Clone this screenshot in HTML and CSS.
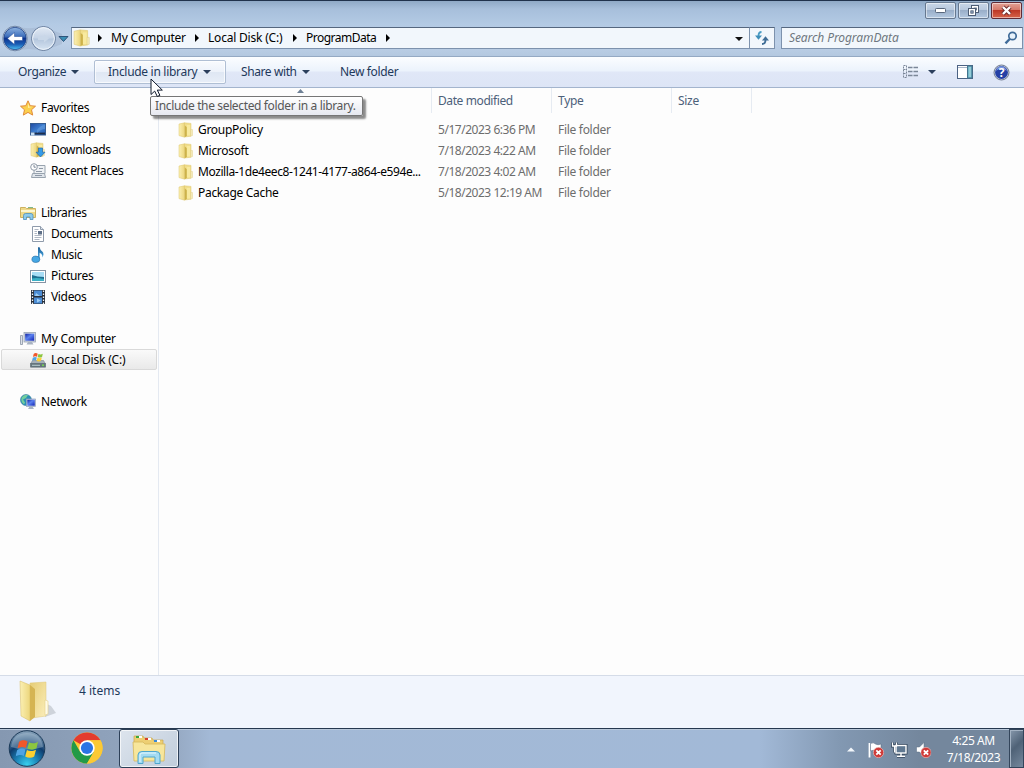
FILE: index.html
```html
<!DOCTYPE html>
<html lang="en">
  <head>
    <meta charset="UTF-8" />
    <meta name="viewport" content="width=device-width, initial-scale=1.0" />
    <title>ProgramData</title>
    <link rel="stylesheet" href="styles.css">
  </head>
  <body>
    <!-- shared gradients and symbols -->
    <svg class="defs" width="0" height="0">
      <defs>
        <linearGradient id="g-folder" x1="0" x2="1" y1="0" y2="0">
          <stop offset="0" stop-color="#fbf0b4" />
          <stop offset="1" stop-color="#ecd67c" />
        </linearGradient>
        <linearGradient id="g-gold" x1="0" x2="1" y1="0" y2="1">
          <stop offset="0" stop-color="#e6cd75" />
          <stop offset="1" stop-color="#fbeebb" />
        </linearGradient>
        <linearGradient id="g-screen" x1="0" x2="1" y1="0" y2="1">
          <stop offset="0" stop-color="#1f49a0" />
          <stop offset="0.5" stop-color="#3f7fd0" />
          <stop offset="1" stop-color="#2458ac" />
        </linearGradient>
        <linearGradient id="g-monitor" x1="0" x2="1" y1="0" y2="1">
          <stop offset="0" stop-color="#0f1fa0" />
          <stop offset="0.45" stop-color="#5b82f0" />
          <stop offset="1" stop-color="#1022b4" />
        </linearGradient>
        <linearGradient id="g-music" x1="0" x2="0" y1="0" y2="1">
          <stop offset="0" stop-color="#1c5f97" />
          <stop offset="1" stop-color="#49aeea" />
        </linearGradient>
        <linearGradient id="g-back" x1="0" x2="0" y1="0" y2="1">
          <stop offset="0" stop-color="#8fb4e0" />
          <stop offset="0.4" stop-color="#3f70bd" />
          <stop offset="0.5" stop-color="#0d348f" />
          <stop offset="0.75" stop-color="#1a5cb4" />
          <stop offset="1" stop-color="#4cc0f2" />
        </linearGradient>
        <linearGradient id="g-forward" x1="0" x2="0" y1="0" y2="1">
          <stop offset="0" stop-color="#e3ebf5" />
          <stop offset="0.48" stop-color="#c5d3e6" />
          <stop offset="0.52" stop-color="#b4c6dd" />
          <stop offset="1" stop-color="#d8e5f3" />
        </linearGradient>
        <radialGradient id="g-orb" cx="0.5" cy="0.95" r="0.95">
          <stop offset="0" stop-color="#39d0ee" />
          <stop offset="0.35" stop-color="#1b7fb4" />
          <stop offset="0.62" stop-color="#0f3d6e" />
          <stop offset="1" stop-color="#8fa9bf" />
        </radialGradient>
        <symbol id="i-folder" viewBox="0 0 16 16">
          <path d="M6.500.8l6.500.6v12.800l-6.500.8z" fill="#f0dd8a" stroke="#dfc76f" stroke-width=".5" />
          <path d="M1 2l5.500-1.200v14.400L1 13.600z" fill="url(#g-folder)" stroke="#dcc46a" stroke-width=".5" />
          <path d="M6.800 3.500l2.200 1.800v8.500l-2.200 1.400z" fill="#cdb24a" />
          <path d="M8.800 3h3.400v10.500H8.800z" fill="#f8ea9f" />
          <path d="M12.500 7.500h2v6l-2 .7z" fill="#f3e9b6" stroke="#ddcb84" stroke-width=".4" />
        </symbol>
        <symbol id="i-flag" viewBox="-2 1 23 20">
          <path d="M1.500 4.500C4 2 7.500 2.500 10 4L8.300 10.500C6 9 3 9 0 11z" fill="#f0572a" />
          <path d="M11.500 4.700C14 6 17.500 6.300 20.500 4.200L19 10.800C16 12.800 12.500 12.300 9.800 11z" fill="#8cc63f" />
          <path d="M-.3 12.500C3 10.500 5.700 10.500 8 12L6.300 18.500C4 17 1 17-2 19z" fill="#4fa3e3" />
          <path d="M9.400 12.600C12 14 15.500 14 18.500 12.200L16.700 19C14 20.800 10.500 20.500 7.700 19z" fill="#fdd031" />
        </symbol>
        <symbol id="i-x" viewBox="0 0 10 10">
          <circle cx="5" cy="5" r="4.700" fill="#cf3a38" stroke="#ecc1bd" stroke-width=".6" />
          <path d="M3 3l4 4M7 3L3 7" stroke="#fff" stroke-width="1.600" />
        </symbol>
      </defs>
    </svg>

    <div class="window">
      <div class="titlebar">
        <div class="win-btn">
          <svg width="12" height="7"><rect x=".5" y="1.500" width="10" height="4" rx=".8" fill="#fff" stroke="#58677c" /></svg>
        </div>
        <div class="win-btn">
          <svg width="13" height="12">
            <rect x="4.500" y=".5" width="7" height="7" fill="#fff" stroke="#4d5d74" />
            <rect x="7" y="3" width="2.500" height="2" fill="#b6c5d8" stroke="#4d5d74" stroke-width=".8" />
            <rect x="1.500" y="3.500" width="7" height="7" fill="#fff" stroke="#4d5d74" />
            <rect x="3.800" y="5.800" width="2.400" height="2.400" fill="#8fa3bd" stroke="#4d5d74" stroke-width=".8" />
          </svg>
        </div>
        <div class="win-btn close">
          <svg width="13" height="11">
            <path d="M3 2l7 7M10 2L3 9" stroke="#6c2a2a" stroke-width="4.200" />
            <path d="M3 2l7 7M10 2L3 9" stroke="#fff" stroke-width="2.400" />
          </svg>
        </div>
      </div>

      <div class="navbar">
        <svg class="nav-buttons" width="71" height="30" viewBox="0 0 71 30">
          <path d="M15 2.500Q29 6 43 2.500L62 10V20L43 27Q29 23 15 27z" fill="#9fb2cc" opacity=".5" />
          <circle cx="15" cy="14.500" r="12.300" fill="#e4edf7" stroke="#7389a8" />
          <circle cx="15" cy="14.500" r="11.200" fill="url(#g-back)" stroke="#1d3f83" stroke-width=".8" />
          <path d="M14.500 8.500L7.500 14.500l7 6v-4h8v-4h-8z" fill="#fff" stroke="#214b96" stroke-width=".5" />
          <circle cx="43.500" cy="14.500" r="12" fill="url(#g-forward)" stroke="#677d9d" />
          <circle cx="43.500" cy="14.500" r="10.900" fill="none" stroke="#eef4fb" stroke-width="1" />
          <path d="M44 10.500l5 4-5 4v-2.500h-6v-3h6z" fill="#c9d7e8" />
          <path d="M59 12.500h9l-4.500 5z" fill="#3c8fb5" stroke="#274b72" stroke-width=".9" />
        </svg>
        <div class="address">
          <svg class="addr-icon" width="18" height="18"><use href="#i-folder" /></svg>
          <span class="arrow"></span>
          <span class="crumb c1">My Computer</span>
          <span class="arrow"></span>
          <span class="crumb c2">Local Disk (C:)</span>
          <span class="arrow"></span>
          <span class="crumb c3">ProgramData</span>
          <span class="arrow"></span>
          <span class="drop"></span>
        </div>
        <div class="refresh">
          <svg width="16" height="16">
            <path d="M7.500 2Q4.500 2 4.500 6" fill="none" stroke="#4a9cc4" stroke-width="1.800" />
            <path d="M1 5.500h7L4.500 9.800z" fill="#3f8fb9" />
            <path d="M8 14Q11.500 14 11.500 10" fill="none" stroke="#3f6d96" stroke-width="1.800" />
            <path d="M8 10.500h7L11.500 6.200z" fill="#3f6d96" />
          </svg>
        </div>
        <div class="search">
          <span class="search-text">Search ProgramData</span>
          <svg width="14" height="14">
            <circle cx="8.500" cy="5" r="3.700" fill="#e8f3fc" stroke="#3f6b99" stroke-width="1.700" />
            <path d="M5.700 8L1.500 12.300" stroke="#3f6b99" stroke-width="2.400" />
          </svg>
        </div>
      </div>

      <div class="toolbar">
        <div class="tool organize"><span>Organize</span><i class="caret"></i></div>
        <div class="tool include hot"><span>Include in library</span><i class="caret"></i></div>
        <div class="tool share"><span>Share with</span><i class="caret"></i></div>
        <div class="tool new"><span>New folder</span></div>
        <div class="tool-icons">
          <svg width="16" height="14">
            <g fill="none" stroke="#7b8798">
              <path d="M.5.500h3v12h-3zM.5 4.500h3M.5 8.500h3" stroke-dasharray="2 1" />
              <path d="M5 2.500h4.500M10.500 2.500H15M5 6.500h4.500M10.500 6.500H15M5 10.500h4.500M10.500 10.500H15" stroke-width="1.300" />
            </g>
          </svg>
          <i class="caret view-caret"></i>
          <svg class="pane-icon" width="16" height="14">
            <rect x=".5" y=".5" width="15" height="13" fill="#fff" stroke="#4b6283" />
            <path d="M1 2.500h9" stroke="#a9b7c9" />
            <rect x="10.500" y="1" width="4.500" height="12" fill="#72b8c9" stroke="#43748e" />
            <path d="M13 2v10" stroke="#b9e0e6" />
          </svg>
          <svg class="help-icon" width="17" height="17">
            <circle cx="8.500" cy="8.500" r="7.500" fill="#c9d0dc" stroke="#717d92" />
            <circle cx="8.500" cy="8.500" r="6.400" fill="#2540a5" />
            <path d="M3 7Q8 2 14 7Q12 2.500 8.500 2.300Q4.500 2.500 3 7z" fill="#7b98e0" />
            <text x="8.500" y="12.800" class="help-mark">?</text>
          </svg>
        </div>
      </div>

      <div class="body">
        <div class="sidebar">
          <div class="group">
            <div class="node root">
              <svg width="16" height="16"><path d="M8 .8l2.200 4.900 5.300.5-4 3.600 1.200 5.300L8 12.400l-4.700 2.700 1.200-5.300-4-3.600 5.300-.5z" fill="#fbd04e" stroke="#e08a3a" /><path d="M8 3l1.300 3.700H13L8 8z" fill="#fff0a0" /></svg>
              <span>Favorites</span>
            </div>
            <div class="node">
              <svg width="16" height="16"><rect x=".5" y="2.500" width="15" height="11.500" fill="url(#g-screen)" stroke="#355c92" /><path d="M1 12.500h14" stroke="#1e2f4c" stroke-width="1.800" /><path d="M1 11.500h3.500v3H1z" fill="#c4dcf2" /><path d="M7 9Q11 4 15 4V8Q11 8 7 12z" fill="#669dde" opacity=".6" /></svg>
              <span>Desktop</span>
            </div>
            <div class="node">
              <svg width="16" height="16"><use href="#i-folder" /><path d="M8.500 6h4v4.200H15L10.500 15 6 10.200h2.500z" fill="#349be8" stroke="#2465a8" stroke-width=".7" /></svg>
              <span>Downloads</span>
            </div>
            <div class="node">
              <svg width="16" height="16"><path d="M4 2.500h11v8H4z" fill="#eef1f4" stroke="#98a3ae" /><path d="M2.500 10.500h12l1 4H1.500z" fill="#dfe4ea" stroke="#98a3ae" /><path d="M6 8.500h6M9 5.500h4M5 12.500h7" stroke="#8d98a6" /><circle cx="4" cy="4" r="3.300" fill="#fff" stroke="#909ba8" /><path d="M4 2v2.200h1.800" fill="none" stroke="#5d6d80" stroke-width=".8" /></svg>
              <span>Recent Places</span>
            </div>
          </div>

          <div class="group">
            <div class="node root">
              <svg width="16" height="16"><path d="M.5 2.500h5l1 1h9v9H.5z" fill="#efd988" stroke="#cdb260" /><path d="M1 5h14v2H1z" fill="#fdf6cf" /><path d="M8 2.500h5" stroke="#7fba8d" /><path d="M3.500 14.500V10.500Q3.500 8.500 5.500 8.500h5.500q2 0 2 2v4h-3V12H6.500v2.500z" fill="#8dcaea" stroke="#4f91bd" stroke-width=".8" /></svg>
              <span>Libraries</span>
            </div>
            <div class="node">
              <svg width="16" height="16"><path d="M2.500.5h8l3 3v12h-11z" fill="#fff" stroke="#8f9bab" /><path d="M10.500.5v3h3" fill="#dde4ee" stroke="#8f9bab" /><path d="M4.500 3.500h4M4.500 5.500h2.500M4.500 7.500h2.500M4.500 9.500h7M4.500 11.500h7M4.500 13.500h5" stroke="#9aa5b4" stroke-width=".8" /><rect x="8" y="5" width="4" height="3.500" fill="#5e6f87" /></svg>
              <span>Documents</span>
            </div>
            <div class="node">
              <svg width="16" height="16"><path d="M8 .3h1.600Q10 3 12.500 4.800 14.500 7 12.300 10.500 12.800 6.700 9.600 5.700V12H8z" fill="url(#g-music)" /><ellipse cx="5.900" cy="12.300" rx="4" ry="3.200" fill="#45a7e4" stroke="#27699d" stroke-width=".6" /></svg>
              <span>Music</span>
            </div>
            <div class="node">
              <svg width="16" height="16"><rect x=".5" y="2.500" width="15" height="12" fill="#fff" stroke="#8694a4" /><path d="M2 4h12v9H2z" fill="#a8ddf5" /><path d="M2 7q5 2 12 2v4H2z" fill="#1e6f91" /><path d="M2 10.500q5-1 12 .5v2H2z" fill="#3bb0c5" /></svg>
              <span>Pictures</span>
            </div>
            <div class="node">
              <svg width="16" height="16"><rect x="1" y="1" width="14" height="14" fill="#272f3b" /><path d="M4 1.500h8V7H4zM4 8.500h8v6H4z" fill="#4c8dd5" /><path d="M6 4l4 3H5zM7 9.500l4 2-4 2z" fill="#9ccdf4" /><path d="M2.500 1.500v14M13.500 1.500v14" stroke="#f2f5f8" stroke-width="1.300" stroke-dasharray="1.500 1.500" /></svg>
              <span>Videos</span>
            </div>
          </div>

          <div class="group computer">
            <div class="node root">
              <svg width="16" height="16"><path d="M.5 4.500h2v9h-2z" fill="#dbe0e8" stroke="#8b95a5" stroke-width=".8" /><rect x="4" y="1.500" width="11.500" height="9.500" fill="#ced5e0" stroke="#9aa4b4" stroke-width=".8" /><rect x="5.200" y="2.700" width="9" height="7" fill="url(#g-monitor)" /><path d="M8 11h4l1.500 2.500h-7z" fill="#a9b3c2" /></svg>
              <span>My Computer</span>
            </div>
            <div class="node selected">
              <svg width="16" height="16"><path d="M2.500 8.500h11l2 3.500H.5z" fill="#a5b0b8" stroke="#7b868e" stroke-width=".6" /><path d="M.5 11.500h15v3.700H.5z" fill="#66777e" stroke="#56656d" stroke-width=".6" /><path d="M2 13.300h8" stroke="#b9ced0" /><circle cx="13" cy="13.300" r="1" fill="#78da50" /><svg x="2" y="0" width="11" height="10"><use href="#i-flag" /></svg></svg>
              <span>Local Disk (C:)</span>
            </div>
          </div>

          <div class="group">
            <div class="node root">
              <svg width="16" height="16"><circle cx="6" cy="6" r="5.500" fill="#2a8fb6" stroke="#3878a0" stroke-width=".6" /><path d="M2 3q3-3 6-2L6 4 3 5.500l2 3-1 2Q0 7 2 3z" fill="#73cf9c" /><rect x="6.500" y="5" width="9" height="7.500" fill="#dbe1ec" stroke="#8fa0b8" stroke-width=".7" /><rect x="7.300" y="5.700" width="7.500" height="6" fill="url(#g-monitor)" /><path d="M9.500 12.500h3l1.500 2.500H8z" fill="#aab5c5" /></svg>
              <span>Network</span>
            </div>
          </div>
        </div>

        <div class="files">
          <div class="row head">
            <div class="cell name"><i class="sort"></i></div>
            <div class="cell date">Date modified</div>
            <div class="cell type">Type</div>
            <div class="cell size">Size</div>
          </div>
          <div class="row">
            <div class="cell name"><svg width="16" height="16"><use href="#i-folder" /></svg><span>GroupPolicy</span></div>
            <div class="cell date">5/17/2023 6:36 PM</div>
            <div class="cell type">File folder</div>
          </div>
          <div class="row">
            <div class="cell name"><svg width="16" height="16"><use href="#i-folder" /></svg><span>Microsoft</span></div>
            <div class="cell date">7/18/2023 4:22 AM</div>
            <div class="cell type">File folder</div>
          </div>
          <div class="row">
            <div class="cell name"><svg width="16" height="16"><use href="#i-folder" /></svg><span class="long">Mozilla-1de4eec8-1241-4177-a864-e594e...</span></div>
            <div class="cell date">7/18/2023 4:02 AM</div>
            <div class="cell type">File folder</div>
          </div>
          <div class="row">
            <div class="cell name"><svg width="16" height="16"><use href="#i-folder" /></svg><span>Package Cache</span></div>
            <div class="cell date">5/18/2023 12:19 AM</div>
            <div class="cell type">File folder</div>
          </div>
        </div>
      </div>

      <div class="details">
        <svg width="40" height="44" viewBox="0 0 40 44">
          <path d="M27 37l11-4-5-7-6-3z" fill="#9aa0a8" opacity=".4" />
          <path d="M12 3l16-1v34l-14 2z" fill="url(#g-gold)" stroke="#dfc678" stroke-width=".5" />
          <path d="M2 1l10 4v36L3 36z" fill="url(#g-folder)" stroke="#d6ba62" stroke-width=".5" />
          <path d="M12 5l5 4v28l-5 4z" fill="#d5b452" />
          <path d="M27 20l3 1v13l-3 1z" fill="#fffbe6" stroke="#e5d28b" stroke-width=".6" />
        </svg>
        <span>4 items</span>
      </div>
    </div>

    <div class="taskbar">
      <svg class="start" width="38" height="38" viewBox="0 0 38 38">
        <circle cx="19" cy="18.500" r="17.800" fill="url(#g-orb)" stroke="#1b3a58" />
        <path d="M3 17Q5 3 19 3T35 17Q19 22 3 17z" fill="#c9d9e6" opacity=".35" />
        <svg x="7.500" y="8" width="23" height="21"><use href="#i-flag" /></svg>
      </svg>
      <svg class="chrome" width="32" height="32" viewBox="0 0 32 32">
        <circle cx="16" cy="16" r="15.600" fill="#fcc934" />
        <path d="M16 16L2.500 8.200A15.600 15.600 0 0 1 29.500 8.200H16z" fill="#e33b2e" />
        <path d="M2.500 8.200A15.600 15.600 0 0 0 16 31.600L22.800 19.900 9.200 19.900z" fill="#229a48" />
        <path d="M16 8.200H29.500A15.600 15.600 0 0 1 16 31.600L22.800 19.900z" fill="#fcc934" />
        <circle cx="16" cy="16" r="7.700" fill="#fff" />
        <circle cx="16" cy="16" r="6.100" fill="#2b74e4" />
      </svg>
      <div class="task">
        <svg width="34" height="32" viewBox="0 0 34 32">
          <path d="M2 3h9l1 2h8l1 2h10v8H2z" fill="#edcf73" stroke="#c9a850" stroke-width=".7" />
          <path d="M4 4h6M13 6h6M22 8h6" stroke="#fff" stroke-width="2" />
          <path d="M4 4h3" stroke="#39a83c" stroke-width="2" />
          <path d="M13 6h3" stroke="#d9402c" stroke-width="2" />
          <path d="M22 8h3" stroke="#3c8bd6" stroke-width="2" />
          <path d="M1 9h10l2 2h20l-1 17H2z" fill="#f7e69b" stroke="#d5b75c" stroke-width=".8" />
          <path d="M6 30.500V22q0-3.500 4-3.500h14q4 0 4 3.500v8.500h-5V24H11v6.500z" fill="#a4dbf2" stroke="#4ea6cd" />
          <path d="M8 29v-7q0-2 2-2h14" fill="none" stroke="#e6f8ff" />
        </svg>
      </div>
      <div class="tray">
        <svg class="tray-up" width="8" height="5"><path d="M0 4.500L4 .5l4 4z" fill="#f3f7fb" /></svg>
        <svg width="18" height="18"><path d="M2.500 2v14.500" stroke="#fff" stroke-width="1.800" /><path d="M3.500 2.500q3-1.500 5 .5 2.500 1.500 5.500 0v7q-3 1.500-5.500 0-2-1.500-5 0z" fill="#fff" stroke="#53657c" stroke-width=".5" /><svg x="6" y="6" width="11" height="11"><use href="#i-x" /></svg></svg>
        <svg width="18" height="18"><g fill="none" stroke="#33465c" stroke-width="3"><path d="M5 4.500h10v7.500H5zM6 15.200h8M10 12v3M1.500 1.500v3.500h4v-3.500M3.500 5.500v6" /></g><rect x="5" y="4.500" width="10" height="7.500" fill="#5f7891" stroke="#fff" stroke-width="1.400" /><path d="M6 15.200h8M10 12v3" stroke="#fff" stroke-width="1.400" /><path d="M1.500 1.500v3.500h4v-3.500M3.500 5.500v6" fill="none" stroke="#fff" stroke-width="1.300" /></svg>
        <svg width="18" height="18"><path d="M1.500 6h3L9 1.500v14L4.500 11h-3z" fill="#fff" stroke="#586c82" stroke-width=".5" /><svg x="5.500" y="6" width="11" height="11"><use href="#i-x" /></svg></svg>
      </div>
      <div class="clock">
        <div class="time">4:25 AM</div>
        <div class="day">7/18/2023</div>
      </div>
      <div class="show-desktop"></div>
    </div>

    <div class="tooltip">Include the selected folder in a library.</div>
    <svg class="cursor" width="14" height="20"><path d="M1 1v15.500l3.700-3.400 2.600 5.400 2.600-1.200-2.600-5.200h5z" fill="#fff" stroke="#111a2c" /></svg>
  </body>
</html>
```

FILE: styles.css
```css
* {
  margin: 0;
  padding: 0;
  box-sizing: border-box;
}

body {
  width: 1024px;
  height: 768px;
  overflow: hidden;
  background-color: #fdfdfd;
  color: #000;
  font-family: "Noto Sans", "Open Sans", sans-serif;
  font-size: 12px;
  line-height: 16px;
  letter-spacing: -0.2px;
  white-space: nowrap;
}

svg {
  display: block;
  flex: none;
}

.defs {
  position: absolute;
}

.window {
  height: 728px;
  display: flex;
  flex-direction: column;
}

/* title bar */
.titlebar {
  height: 24px;
  display: flex;
  justify-content: flex-end;
  align-items: flex-start;
  gap: 2px;
  padding: 1px 2px 0 0;
  border-top: 1px solid #20324c;
  background: linear-gradient(#8fa9c6, #a7bfdb 8px, #b3cae4);
}

.win-btn {
  width: 31px;
  height: 17px;
  display: flex;
  align-items: center;
  justify-content: center;
  border: 1px solid #66788f;
  border-radius: 2px;
  box-shadow: inset 0 0 0 1px rgba(255, 255, 255, 0.5);
  background: linear-gradient(#c9d7e8, #b7c8dd 48%, #9aafc9 50%, #b3c8e0);
}

.win-btn.close {
  border-color: #612b35;
  background: linear-gradient(#e2a296, #d47767 48%, #bd3826 50%, #d7644a);
}

/* address bar */
.navbar {
  height: 32px;
  display: flex;
  align-items: center;
  padding-bottom: 4px;
  background: linear-gradient(#b3cae4, #bdd0e7 60%, #b3c8e0);
}

.nav-buttons {
  margin-top: 1px;
}

.address,
.refresh,
.search {
  height: 22px;
  display: flex;
  align-items: center;
  border: 1px solid #7d92ad;
  border-top-color: #55677f;
  background-color: #f2f7fc;
}

.address {
  width: 679px;
}

.addr-icon {
  margin-left: 1px;
  margin-right: 1px;
}

.arrow {
  width: 4px;
  height: 8px;
  background-color: #000;
  clip-path: polygon(0 0, 100% 50%, 0 100%);
  margin-left: 6px;
}

.crumb {
  margin-left: 9px;
}

.crumb + .arrow {
  margin-left: 9px;
}

.c1 {
  width: 75px;
}

.c2 {
  width: 76px;
}

.c3 {
  width: 71px;
  letter-spacing: -0.5px;
}

.drop {
  width: 8px;
  height: 4px;
  margin: 2px 6px 0 auto;
  background-color: #111;
  clip-path: polygon(0 0, 100% 0, 50% 100%);
}

.refresh {
  width: 25px;
  border-left: none;
  justify-content: center;
}

.search {
  width: 242px;
  margin-left: 6px;
  padding: 0 4px 0 7px;
  justify-content: space-between;
}

.search-text {
  color: #6f7780;
  font-style: italic;
  letter-spacing: -0.1px;
}

/* command bar */
.toolbar {
  height: 32px;
  display: flex;
  align-items: center;
  border-top: 1px solid #94a9c3;
  border-bottom: 1px solid #a3b4cd;
  background: linear-gradient(#fbfdff, #ecf3fc 45%, #e0e7f7 52%, #dde5f6);
  color: #1e395b;
}

.tool {
  height: 24px;
  display: flex;
  align-items: center;
  justify-content: space-between;
}

.caret {
  width: 8px;
  height: 4px;
  background-color: #2b3f5c;
  clip-path: polygon(0 0, 100% 0, 50% 100%);
}

.organize {
  width: 61px;
  margin-left: 18px;
  letter-spacing: -0.4px;
}

.include {
  width: 132px;
  margin-left: 15px;
  padding: 0 14px 0 13px;
  letter-spacing: -0.3px;
}

.hot {
  border: 1px solid #b0bfd4;
  border-radius: 2px;
  box-shadow: inset 0 0 0 1px rgba(255, 255, 255, 0.7);
  background: linear-gradient(#f9fbfe, #edf2fa 48%, #dfe7f3 50%, #e8eef8);
}

.share {
  width: 69px;
  margin-left: 15px;
  letter-spacing: -0.4px;
}

.new {
  margin-left: 30px;
  letter-spacing: -0.35px;
}

.tool-icons {
  display: flex;
  align-items: center;
  margin: 0 14px 0 auto;
}

.view-caret {
  margin-left: 9px;
}

.pane-icon {
  margin-left: 21px;
}

.help-icon {
  margin-left: 20px;
}

.help-mark {
  fill: #fff;
  font-size: 12px;
  font-weight: bold;
  text-anchor: middle;
}

/* main area */
.body {
  flex: 1;
  display: flex;
  min-height: 0;
}

.sidebar {
  width: 159px;
  padding: 9px 1px 0 1px;
  border-right: 1px solid #e4e9f1;
  letter-spacing: -0.35px;
}

.group {
  margin-bottom: 21px;
}

.group.computer {
  letter-spacing: -0.2px;
}

.node {
  height: 21px;
  display: flex;
  align-items: center;
  gap: 5px;
  padding-left: 29px;
}

.node.root {
  padding-left: 19px;
}

.node.selected {
  padding-left: 28px;
  border: 1px solid #d9d9d9;
  border-radius: 2px;
  background: linear-gradient(#fafafa, #e9e9e9);
}

.files {
  flex: 1;
}

.row {
  height: 21px;
  display: flex;
  align-items: center;
  color: #6d6d6d;
  letter-spacing: -0.3px;
}

.cell {
  width: 120px;
  padding-left: 6px;
}

.cell.date {
  letter-spacing: -0.47px;
}

.cell.name {
  width: 273px;
  display: flex;
  align-items: center;
  gap: 4px;
  padding-left: 19px;
  color: #000;
}

.long {
  letter-spacing: -0.41px;
}

.head {
  height: 25px;
  margin-bottom: 6px;
  color: #4c607a;
}

.head .cell {
  height: 25px;
  padding-top: 5px;
  border-right: 1px solid #e6ebf2;
}

.head .cell.date {
  letter-spacing: -0.4px;
}

.head .cell.size {
  width: 80px;
}

.head .cell.name {
  align-items: flex-start;
}

.sort {
  width: 7px;
  height: 4px;
  margin: -4px 0 0 119px;
  background-color: #6f8196;
  clip-path: polygon(50% 0, 100% 100%, 0 100%);
}

/* details pane */
.details {
  height: 53px;
  display: flex;
  gap: 21px;
  padding: 4px 0 0 18px;
  border-top: 1px solid #d5dce8;
  background-color: #f1f5fd;
  color: #1e395b;
}

.details span {
  margin-top: 3px;
  letter-spacing: 0;
}

/* taskbar */
.taskbar {
  height: 40px;
  display: flex;
  align-items: center;
  border-top: 1px solid #26384f;
  box-shadow: inset 0 1px 0 #b9c8da;
  background: linear-gradient(90deg, #8598b1, #94a7c0 170px, #a3b9d6 210px, #a2b9d7 760px, #8298b2 840px, #74879d 920px, #74879d);
}

.start {
  margin-left: 8px;
}

.chrome {
  margin: 0 0 2px 25px;
}

.task {
  width: 60px;
  height: 39px;
  display: flex;
  align-items: center;
  justify-content: center;
  margin-left: 16px;
  border: 1px solid #2d4058;
  border-radius: 3px;
  box-shadow: inset 0 0 0 1px rgba(255, 255, 255, 0.7);
  background: linear-gradient(135deg, #dde4ed, #c0cddb);
}

.tray {
  display: flex;
  align-items: center;
  gap: 6px;
  margin: 2px 0 0 auto;
}

.tray-up {
  margin-right: 6px;
}

.clock {
  width: 75px;
  padding-left: 6px;
  color: #fff;
  text-align: center;
  line-height: 17px;
  letter-spacing: -0.4px;
}

.show-desktop {
  width: 15px;
  height: 39px;
  margin-left: 1px;
  border: 1px solid #33455b;
  box-shadow: inset 1px 1px 0 #a3b2c3;
  background: linear-gradient(135deg, #8798ac, #4f6277 45%, #75889d);
}

/* overlays */
.tooltip {
  position: absolute;
  left: 150px;
  top: 96px;
  width: 213px;
  height: 20px;
  padding: 1px 0 0 4px;
  border: 1px solid #767676;
  border-radius: 2px;
  box-shadow: 3px 3px 2px rgba(0, 0, 0, 0.45);
  background: linear-gradient(#fff, #e6e8f0);
  color: #575757;
  letter-spacing: -0.36px;
}

.cursor {
  position: absolute;
  left: 150px;
  top: 78px;
}
```
